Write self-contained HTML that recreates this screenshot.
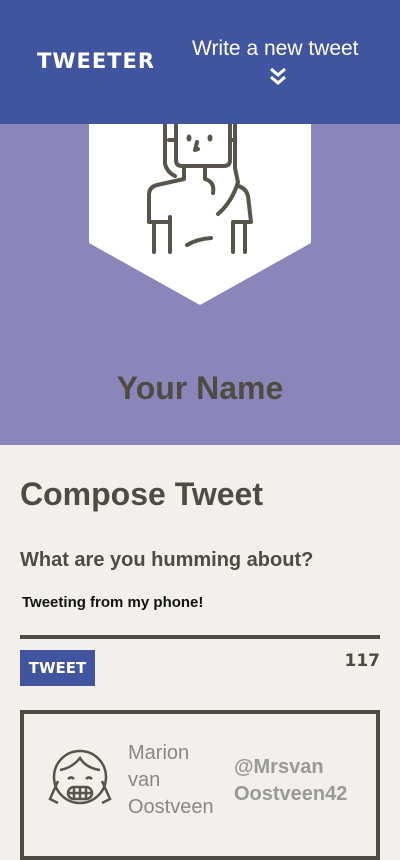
<!DOCTYPE html>
<html><head><style>
*{margin:0;padding:0;box-sizing:border-box}
body{width:400px;height:842px;overflow:hidden;background:#f3f0eb;font-family:"Liberation Sans",sans-serif;color:#4f4b43;position:relative}
.hdr{position:absolute;left:0;top:0;width:400px;height:124px;background:#4054a0}
.logo{position:absolute;left:37px;top:49px;color:#fff;font-weight:900;font-size:21px;letter-spacing:1px;font-family:"DejaVu Sans",sans-serif}
.wn{position:absolute;left:192px;top:37px;color:#fff;font-size:21px;font-weight:300}
.hero{position:absolute;left:0;top:124px;width:400px;height:321px;background:#8b86b9}
.name{position:absolute;left:0;width:400px;top:370px;text-align:center;font-size:32px;font-weight:bold;color:#4f4b43}
h1{position:absolute;left:20px;top:476px;font-size:32px}
h2{position:absolute;left:20px;top:549px;font-size:20px}
.tx{position:absolute;left:22px;top:594px;font-size:15px;font-weight:bold;color:#111}
.line{position:absolute;left:20px;top:635px;width:360px;height:4px;background:#4f4b43}
.btn{position:absolute;left:20px;top:650px;width:75px;height:36px;background:#4054a0;color:#fff;font-weight:900;font-size:15px;text-align:center;line-height:36px;font-family:"DejaVu Sans",sans-serif}
.cnt{position:absolute;right:20px;top:651px;font-weight:900;font-size:17px;font-family:"DejaVu Sans",sans-serif}
.card{position:absolute;left:20px;top:710px;width:360px;height:150px;border:4px solid #4f4b43}
.nm{position:absolute;left:128px;top:740px;font-size:20px;line-height:27px;color:#888;font-weight:300}
.hd{position:absolute;left:234px;top:754px;font-size:20px;line-height:27px;color:#999;font-weight:bold}
</style></head><body>
<div class="hdr"><div class="logo">TWEETER</div><div class="wn">Write a new tweet</div>
<svg style="position:absolute;left:268px;top:66px" width="20" height="22" viewBox="0 0 20 22"><path d="M3 3l7 6 7-6M3 11l7 6 7-6" stroke="#fff" stroke-width="3" fill="none"/></svg></div>
<div class="hero"></div>
<svg style="position:absolute;left:89px;top:124px" width="222" height="182" viewBox="89 124 222 182"><path d="M89 124H311V243L200 305 89 243Z" fill="#fff"/>
<g stroke="#58544a" stroke-width="4" fill="none" stroke-linecap="round" stroke-linejoin="round">
<path d="M176 124v36q0 6 6 6h42q6 0 6-6v-36"/>
<path d="M165 124v40q2 8 10 12M235 124v44q2 10 3 14q-6 20-20 32"/>
<path d="M169 140h6M231 140h4"/>
<path d="M184 167v12l-27 6q-8 2-8 10v27h18M154 222v30M170 217v35"/>
<path d="M205 167v12q10 3 8 14M238 186q8 2 10 10l3 26h-17M233 222v30M245 222v30"/>
<path d="M187 245q10-6 24-7"/>
<path d="M197 142l-2 8 3-1"/></g>
<g fill="#58544a"><ellipse cx="189" cy="138" rx="2.5" ry="3.5"/><ellipse cx="210" cy="138" rx="2.5" ry="3.5"/></g></svg>
<div class="name">Your Name</div>
<h1>Compose Tweet</h1>
<h2>What are you humming about?</h2>
<div class="tx">Tweeting from my phone!</div>
<div class="line"></div>
<div class="btn">TWEET</div>
<div class="cnt">117</div>
<div class="card"></div>
<svg style="position:absolute;left:48px;top:745px" width="64" height="68" viewBox="0 0 64 68"><g stroke="#58544a" stroke-width="2.5" fill="none"><circle cx="32" cy="32" r="26"/><path d="M10 36l-8 18 8 4M54 36l8 18-8 4M12 25q12-2 20-12 6 10 20 12"/><rect x="20" y="42" width="24" height="12" rx="6"/><path d="M20 34q3-3 6 0M38 34q3-3 6 0M26 42v12M32 42v12M38 42v12M20 48h24"/></g></svg>
<div class="nm">Marion<br>van<br>Oostveen</div>
<div class="hd">@Mrsvan<br>Oostveen42</div>
</body></html>
